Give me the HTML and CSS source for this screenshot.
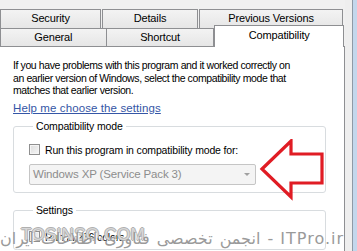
FILE: index.html
```html
<!DOCTYPE html>
<html>
<head>
<meta charset="utf-8">
<link rel="stylesheet" href="styles.css">
</head>
<body>
<div class="window">
  <div class="dialog">
    <div class="tabs">
      <div class="tabrow row1">
        <div class="tab t-security">Security</div>
        <div class="tab t-details">Details</div>
        <div class="tab t-prev">Previous Versions</div>
      </div>
      <div class="tabrow row2">
        <div class="tab t-general">General</div>
        <div class="tab t-shortcut">Shortcut</div>
        <div class="tab t-compat selected">Compatibility</div>
      </div>
    </div>
    <div class="panel">
      <p class="intro">If you have problems with this program and it worked correctly on an earlier version of Windows, select the compatibility mode that matches that earlier version.</p>
      <a class="help">Help me choose the settings</a>
      <fieldset class="group g-compat">
        <legend>Compatibility mode</legend>
        <label class="check"><span class="box"></span>Run this program in compatibility mode for:</label>
        <div class="select"><span>Windows XP (Service Pack 3)</span><span class="caret"></span></div>
      </fieldset>
      <fieldset class="group g-settings">
        <legend>Settings</legend>
        <label class="check"><span class="box"></span>Run in 256 colors</label>
      </fieldset>
      <svg class="arrow" width="70" height="64" viewBox="0 0 70 64">
        <polygon points="3,30 32,2 32,15 63,15 63,44 32,44 32,58" fill="none" stroke="#e01c24" stroke-width="3.2" stroke-linejoin="miter"/>
      </svg>
      <div class="wm wm-en">TOSINSO.COM</div>
      <div class="wm wm-fa" dir="rtl"><span class="wm-site">ITPro.ir</span> - انجمن تخصصی فناوری اطلاعات ایران</div>
    </div>
  </div>
  <div class="frame"><div class="frame-line"></div><div class="frame-blue"></div></div>
</div>
</body>
</html>
```
FILE: styles.css
```css
html, body {
  margin: 0;
  padding: 0;
}
body {
  background: #f0f0f0;
  font-family: "Liberation Sans", Arial, sans-serif;
  font-size: 10.5px;
  letter-spacing: -0.15px;
  color: #000;
  width: 357px;
  height: 251px;
  overflow: hidden;
}
.window {
  display: flex;
  height: 251px;
}
.dialog {
  width: 345px;
  display: flex;
  flex-direction: column;
}
.tabs {
  padding-top: 9px;
}
.tabrow {
  display: flex;
}
.tab {
  box-sizing: border-box;
  height: 19px;
  border: 1px solid #8e8f92;
  border-bottom: none;
  background: linear-gradient(#f3f3f3, #e6e6e6);
  text-align: center;
  line-height: 17px;
  margin-right: 1px;
  font-size: 11px;
}
.t-security { width: 101px; }
.t-details { width: 96px; }
.t-prev { width: 144px; }
.row2 {
  height: 18px;
}
.row2 .tab { height: 18px; line-height: 17px; }
.t-general { width: 107px; margin-right: 0; }
.t-shortcut { width: 108px; margin-right: 0; border-left: none; }
.t-compat.selected {
  width: 130px;
  height: 22px;
  margin-top: -3px;
  background: #fff;
  position: relative;
  z-index: 2;
  line-height: 19px;
}
.panel {
  flex: 1;
  background: #fff;
  border-top: 1px solid #8e8f92;
  border-right: 1px solid #8e8f92;
  position: relative;
  padding: 12px 0 0 13px;
  overflow: hidden;
}
.intro {
  margin: 0;
  width: 286px;
  line-height: 12.5px;
  letter-spacing: -0.4px;
}
.help {
  display: inline-block;
  margin-top: 5px;
  color: #3556a6;
  text-decoration: underline;
  font-size: 11.5px;
  letter-spacing: 0.1px;
  line-height: 13px;
}
.group {
  margin: 0;
  width: 313px;
  box-sizing: border-box;
  border: 1px solid #d8dcdf;
  border-radius: 3px;
  padding: 0 0 0 15px;
}
.group legend {
  padding: 0 3px;
  margin-left: 4px;
  line-height: 11px;
}
.g-compat {
  margin-top: 6px;
  height: 72px;
}
.g-settings {
  margin-top: 12px;
  height: 45px;
}
.check {
  display: flex;
  align-items: center;
  height: 12px;
  margin-top: 12px;
}
.box {
  width: 9px;
  height: 9px;
  border: 1px solid #8f8f8f;
  background: linear-gradient(135deg, #dcdcdc, #f6f6f6);
  margin-right: 5px;
  box-shadow: inset 0 0 0 1px #f4f4f4;
}
.select {
  margin-top: 8px;
  width: 227px;
  height: 21px;
  box-sizing: border-box;
  border: 1px solid #c5c5c5;
  border-radius: 2px;
  background: #f4f4f4;
  color: #8d8d8d;
  display: flex;
  align-items: center;
  justify-content: space-between;
  padding: 0 5px 0 3px;
  font-size: 11.5px;
}
.caret {
  width: 0;
  height: 0;
  border-left: 3px solid transparent;
  border-right: 3px solid transparent;
  border-top: 3px solid #a0a0a0;
}
.g-settings .check {
  margin-top: 15px;
}
.arrow {
  position: absolute;
  left: 259px;
  top: 92px;
}
.wm {
  position: absolute;
  white-space: nowrap;
}
.wm-en {
  left: 21px;
  top: 178px;
  font-size: 17px;
  letter-spacing: 0.3px;
  color: rgba(255,255,255,0.5);
  text-shadow: -1px 0 #b0b0b0, 1px 0 #b0b0b0, 0 -1px #b0b0b0, 0 1px #b0b0b0;
}
.wm-fa {
  right: 0;
  top: 182px;
  font-family: "DejaVu Sans", sans-serif;
  font-size: 16px;
  letter-spacing: 0;
  word-spacing: 2px;
  color: #9a9a9a;
  text-shadow: 1px 1px #ffffff;
}
.wm-site {
  letter-spacing: 1px;
  font-size: 16px;
}
.frame {
  width: 12px;
  display: flex;
}
.frame-line {
  width: 7px;
  border-right: 1px solid #8e9aa6;
  background: #eeeeee;
}
.frame-blue {
  flex: 1;
  background: #c3d7ec;
}
```
